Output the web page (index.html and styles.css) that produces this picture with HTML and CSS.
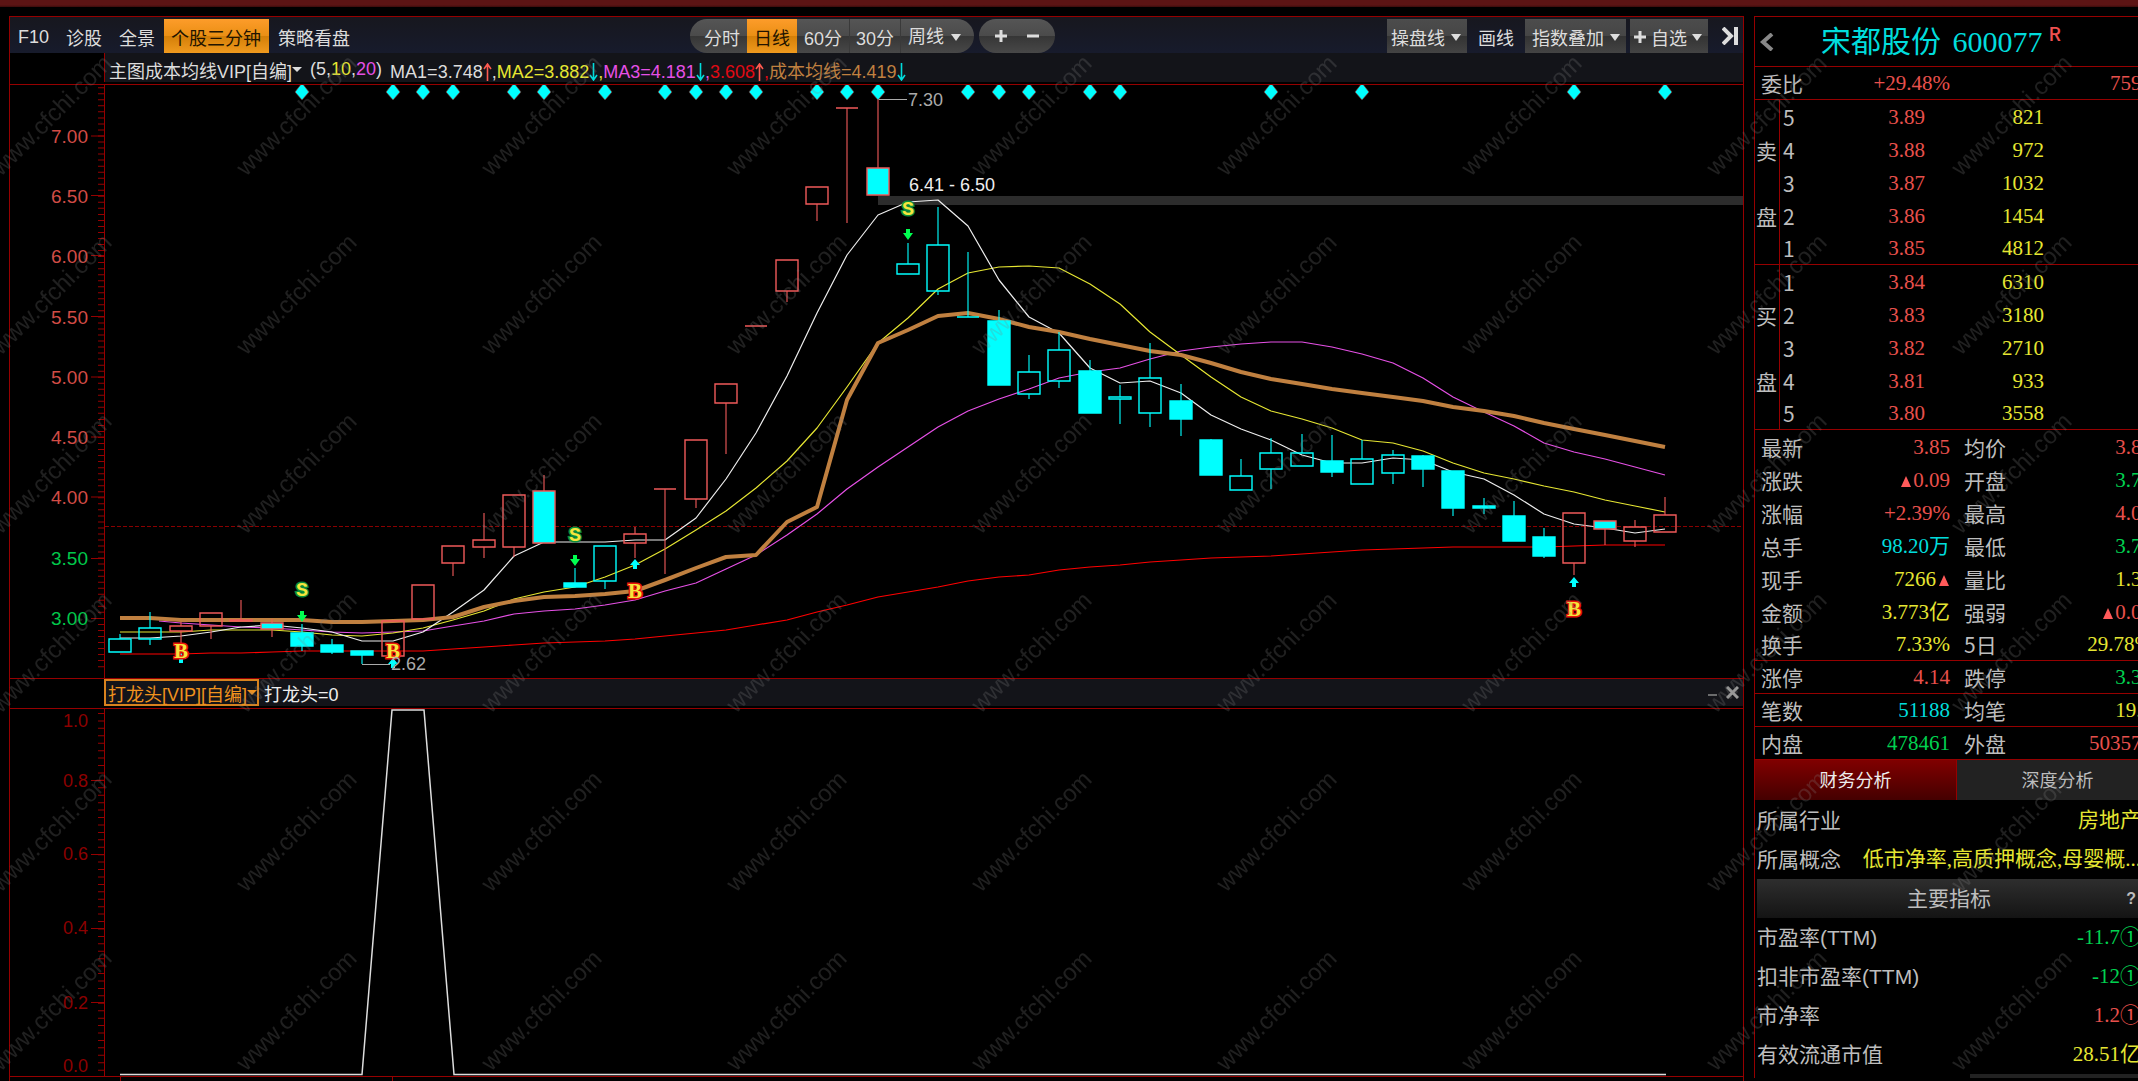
FILE: index.html
```html
<!DOCTYPE html>
<html lang="zh-CN">
<head>
<meta charset="utf-8">
<meta name="viewport" content="width=device-width, initial-scale=1">
<title>宋都股份 600077</title>
<link rel="stylesheet" href="styles.css">
</head>
<body>
<div class="app">
  <div class="app-strip"></div>
  <div class="workspace">

    <main class="board">
      <header class="toolbar">
        <nav class="tools">
          <button class="tool" type="button">F10</button>
          <button class="tool" type="button">诊股</button>
          <button class="tool" type="button">全景</button>
          <button class="tool tool-active" type="button">个股三分钟</button>
          <button class="tool" type="button">策略看盘</button>
        </nav>
        <div class="periods">
          <div class="pill">
            <button class="period period-first" type="button">分时</button>
            <button class="period period-active" type="button">日线</button>
            <button class="period" type="button">60分</button>
            <button class="period period-ruled" type="button">30分</button>
            <span class="period-pick">
              <select class="period-select" aria-label="周期"><option>周线</option></select>
              <span class="caret"></span>
            </span>
          </div>
          <div class="pill pill-zoom">
            <button class="zoom" type="button" aria-label="放大"><svg width="12" height="12" viewBox="0 0 12 12"><path d="M6 0v12M0 6h12" stroke="#ddd" stroke-width="3"/></svg></button>
            <button class="zoom" type="button" aria-label="缩小"><svg width="12" height="12" viewBox="0 0 12 12"><path d="M0 6h12" stroke="#ddd" stroke-width="3"/></svg></button>
          </div>
        </div>
        <div class="actions">
          <button class="menu" type="button">操盘线<span class="caret"></span></button>
          <button class="tool draw" type="button">画线</button>
          <button class="menu menu-wide" type="button">指数叠加<span class="caret"></span></button>
          <button class="menu menu-add" type="button"><svg width="12" height="12" viewBox="0 0 12 12"><path d="M6 0v12M0 6h12" stroke="#ddd" stroke-width="3"/></svg>自选<span class="caret"></span></button>
          <button class="collapse" type="button" aria-label="收起侧栏"><svg width="17" height="18" viewBox="0 0 17 18"><path d="M1 1l8 8-8 8M14 0v18" fill="none" stroke="#ddd" stroke-width="4"/></svg></button>
        </div>
      </header>

      <div class="legend-row">
        <div class="legend">
          <button class="indicator" type="button">主图成本均线VIP[自编]<span class="caret caret-small"></span></button>
          <span class="params">(5,<span class="yellow">10</span>,<span class="magenta">20</span>)</span>
          <span class="averages">MA1=3.748<svg class="trend up" viewBox="0 0 9 18"><path d="M4.500 18V1M1 6l3.500-5L8 6"/></svg>,<span class="yellow">MA2=3.882<svg class="trend down" viewBox="0 0 9 18"><path d="M4.500 0v17M1 12l3.500 5L8 12"/></svg>,</span><span class="magenta">MA3=4.181<svg class="trend down" viewBox="0 0 9 18"><path d="M4.500 0v17M1 12l3.500 5L8 12"/></svg>,</span><span class="red">3.608<svg class="trend up" viewBox="0 0 9 18"><path d="M4.500 18V1M1 6l3.500-5L8 6"/></svg>,</span><span class="bronze">成本均线=4.419<svg class="trend down" viewBox="0 0 9 18"><path d="M4.500 0v17M1 12l3.500 5L8 12"/></svg></span></span>
        </div>
      </div>

      <svg class="chart price-chart" id="price-chart" viewBox="10 85 1733 593" role="img" aria-label="日K线图">
        <path class="rule" d="M104.500 85V678"/>
        <path class="ticks" d="M101 87.250V668" stroke-dasharray="1 5.030"/>
        <path class="rule" d="M91 136h13M91 195.500h13M91 255.500h13M91 316.500h13M91 377h13M91 437h13M91 497h13M91 558.500h13M91 618.500h13"/>
        <g class="scale">
          <text x="88" y="143">7.00</text><text x="88" y="203">6.50</text><text x="88" y="263">6.00</text>
          <text x="88" y="324">5.50</text><text x="88" y="384">5.00</text><text x="88" y="444">4.50</text>
          <text x="88" y="504">4.00</text><text class="below" x="88" y="565">3.50</text><text class="below" x="88" y="625">3.00</text>
        </g>
        <rect x="878" y="196" width="865" height="9" fill="#2c2c2c"/>
        <path class="last-close" d="M105 526.500H1743"/>
        <g id="averages"></g>
        <g id="candles"></g>
        <path d="M878 99.500h29M362 664.500h28" stroke="#aaa" stroke-width="1"/>
        <g id="marks"></g>
        <g class="notes">
          <text x="908" y="106">7.30</text>
          <text x="391" y="670">2.62</text>
          <text class="note-bright" x="909" y="191">6.41 - 6.50</text>
        </g>
      </svg>

      <div class="sub-row">
        <div class="sub-legend">
          <button class="sub-indicator" type="button">打龙头[VIP][自编]<span class="caret caret-small"></span></button>
          <span class="sub-value">打龙头=0</span>
          <span class="sub-controls">
            <button class="bare" type="button" aria-label="最小化"><svg width="9" height="12" viewBox="0 0 9 12"><path d="M0 8h9" stroke="#888" stroke-width="1.500"/></svg></button>
            <button class="bare" type="button" aria-label="关闭"><svg width="13" height="13" viewBox="0 0 13 13"><path d="M1 1l11 11M12 1L1 12" stroke="#999" stroke-width="3"/></svg></button>
          </span>
        </div>
      </div>

      <svg class="chart" viewBox="10 709 1733 372" role="img" aria-label="打龙头指标图">
        <path class="rule" d="M104.500 709V1076M10 1076.500H1743M120.500 1076v5M392.500 1076v5"/>
        <path class="ticks" d="M101 713V1072" stroke-dasharray="1 6.430"/>
        <path class="rule" d="M91 780.500h13M91 854.500h13M91 928.500h13M91 1002.500h13"/>
        <g class="sub-scale">
          <text x="88" y="727">1.0</text><text x="88" y="787">0.8</text><text x="88" y="860">0.6</text>
          <text x="88" y="934">0.4</text><text x="88" y="1009">0.2</text><text x="88" y="1072">0.0</text>
        </g>
        <path d="M120 1074.500H362L392 710H424L454 1074.500H1666" fill="none" stroke="#ddd" stroke-width="1.500"/>
      </svg>
    </main>

    <aside class="quote">
      <header class="quote-head">
        <button class="bare back" type="button" aria-label="上一只"><svg width="15" height="18" viewBox="0 0 15 18"><path d="M13 1L4 9l9 8" fill="none" stroke="#888" stroke-width="4"/></svg></button>
        <h1 class="stock">宋都股份 <span class="code">600077</span></h1><sup class="margin-flag">R</sup>
      </header>

      <table class="stats">
        <colgroup><col class="c-label"><col class="c-value"><col class="c-label2"><col></colgroup>
        <tbody><tr class="ruled"><th>委比</th><td class="rise">+29.48%</td><th></th><td class="rise">7599</td></tr></tbody>
      </table>

      <table class="book">
        <colgroup><col class="c-side"><col class="c-level"><col class="c-price"><col class="c-volume"><col></colgroup>
        <tbody>
          <tr><th></th><th>5</th><td class="rise">3.89</td><td>821</td><td></td></tr>
          <tr><th>卖</th><th>4</th><td class="rise">3.88</td><td>972</td><td></td></tr>
          <tr><th></th><th>3</th><td class="rise">3.87</td><td>1032</td><td></td></tr>
          <tr><th>盘</th><th>2</th><td class="rise">3.86</td><td>1454</td><td></td></tr>
          <tr class="ruled"><th></th><th>1</th><td class="rise">3.85</td><td>4812</td><td></td></tr>
          <tr><th></th><th>1</th><td class="rise">3.84</td><td>6310</td><td></td></tr>
          <tr><th>买</th><th>2</th><td class="rise">3.83</td><td>3180</td><td></td></tr>
          <tr><th></th><th>3</th><td class="rise">3.82</td><td>2710</td><td></td></tr>
          <tr><th>盘</th><th>4</th><td class="rise">3.81</td><td>933</td><td></td></tr>
          <tr class="ruled"><th></th><th>5</th><td class="rise">3.80</td><td>3558</td><td></td></tr>
        </tbody>
      </table>

      <table class="stats">
        <colgroup><col class="c-label"><col class="c-value"><col class="c-label2"><col></colgroup>
        <tbody>
          <tr><th>最新</th><td class="rise">3.85</td><th>均价</th><td class="rise">3.84</td></tr>
          <tr><th>涨跌</th><td class="rise"><span class="tri"></span>0.09</td><th>开盘</th><td class="fall">3.71</td></tr>
          <tr><th>涨幅</th><td class="rise">+2.39%</td><th>最高</th><td class="rise">4.00</td></tr>
          <tr><th>总手</th><td class="aqua">98.20万</td><th>最低</th><td class="fall">3.71</td></tr>
          <tr><th>现手</th><td>7266<span class="tri tri-after"></span></td><th>量比</th><td>1.31</td></tr>
          <tr><th>金额</th><td>3.773亿</td><th>强弱</th><td class="rise"><span class="tri"></span>0.01</td></tr>
          <tr class="ruled"><th>换手</th><td>7.33%</td><th>5日</th><td>29.78%</td></tr>
          <tr class="ruled"><th>涨停</th><td class="rise">4.14</td><th>跌停</th><td class="fall">3.38</td></tr>
          <tr class="ruled"><th>笔数</th><td class="aqua">51188</td><th>均笔</th><td>19.2</td></tr>
          <tr class="ruled"><th>内盘</th><td class="fall">478461</td><th>外盘</th><td class="rise">503575</td></tr>
        </tbody>
      </table>

      <div class="tabs">
        <button class="tab tab-active" type="button">财务分析</button>
        <button class="tab" type="button">深度分析</button>
      </div>

      <section class="finance">
        <dl class="facts">
          <div class="fact"><dt>所属行业</dt><dd>房地产</dd></div>
          <div class="fact"><dt>所属概念</dt><dd>低市净率,高质押概念,母婴概...</dd></div>
        </dl>
        <h2 class="facts-title">主要指标<button class="bare help" type="button">?</button></h2>
        <dl class="facts">
          <div class="fact"><dt>市盈率(TTM)</dt><dd class="fall">-11.7①</dd></div>
          <div class="fact"><dt>扣非市盈率(TTM)</dt><dd class="fall">-12①</dd></div>
          <div class="fact"><dt>市净率</dt><dd class="rise">1.2①</dd></div>
          <div class="fact"><dt>有效流通市值</dt><dd>28.51亿</dd></div>
        </dl>
      </section>
      <div class="next-panel"></div>
    </aside>
  </div>

  <svg class="watermark" aria-hidden="true">
    <defs>
      <pattern id="site" x="-9" y="10" width="245" height="179" patternUnits="userSpaceOnUse">
        <text x="10" y="167" transform="rotate(-45 10 167)">www.cfchi.com</text>
      </pattern>
    </defs>
    <rect width="100%" height="100%" fill="url(#site)"/>
  </svg>
</div>
<script src="chart.js"></script>
</body>
</html>
```
FILE: styles.css
```css
:root {
  --line: #960000;
  --rise: #e8504c;
  --fall: #00d250;
  --yellow: #e6e632;
  --aqua: #00dcdc;
  --label: #bdbdbd;
  --cjk: "Noto Sans CJK SC", sans-serif;
  --ui: "Liberation Sans", "Noto Sans CJK SC", sans-serif;
  --figures: "Liberation Serif", "Noto Sans CJK SC", serif;
}

* { box-sizing: border-box; }

body {
  margin: 0;
  background: #000;
  color: #ddd;
  font-family: var(--ui);
  font-size: 18px;
}

button, select {
  margin: 0;
  padding: 0;
  border: 0;
  background: none;
  color: inherit;
  font: inherit;
  white-space: nowrap;
}

svg { display: block; }

.app {
  position: relative;
  min-height: 100vh;
  overflow: hidden;
}

.app-strip {
  height: 7px;
  background: linear-gradient(#5c1414 70%, #3c0c0c);
}

.workspace {
  display: flex;
  align-items: flex-start;
  gap: 10px;
  margin: 9px -20px 0 9px;
}

.board {
  flex: 1;
  min-width: 0;
  border: 1px solid var(--line);
  border-bottom: 0;
}

/* toolbar */
.toolbar {
  display: grid;
  grid-template-columns: 1fr auto 1fr;
  height: 36px;
  padding-top: 2px;
  background: linear-gradient(#17171e, #171b2c);
}

.tools, .periods, .actions, .pill { display: flex; }
.tools { gap: 1px; }
.tool, .period, .menu { padding: 2px 8px 0; }

.tools .tool-active { padding: 2px 8px 0 7px; }

.tool-active, .period-active {
  background: linear-gradient(#fd9c2a, #ea8f14 50%, #d47f08 51%, #f09a1e);
  color: #221400;
}

.periods {
  gap: 5px;
  margin-right: 8px;
}

.pill {
  overflow: hidden;
  border-radius: 17px;
  background: linear-gradient(#555, #4b4b4b 49%, #363636 51%, #484848);
}

.period { padding: 2px 7px 0; }
.period-first { padding-left: 14px; }
.period-ruled { border: solid #3a3a3a; border-width: 0 1px; padding: 2px 6px 0; }

.period-pick {
  display: flex;
  align-items: center;
  padding: 2px 13px 0 7px;
}

.period-select {
  width: 43px;
  appearance: none;
}

.pill-zoom {
  width: 76px;
  justify-content: center;
  align-items: center;
  gap: 20px;
}

.caret {
  display: inline-block;
  border: solid transparent;
  border-width: 7px 5px 0;
  border-top-color: #ddd;
}

.caret-small {
  border-width: 5px 5px 0;
  border-top-color: currentColor;
}

.actions {
  justify-content: flex-end;
  padding-right: 4px;
}

.menu {
  display: flex;
  align-items: center;
  gap: 6px;
  padding: 2px 6px 0 4px;
  background: linear-gradient(#4c4c4c, #464646 49%, #333 51%, #444);
}

.menu-wide { padding: 2px 6px 0 7px; }
.menu-add { gap: 5px; margin-left: 4px; }
.draw { padding: 2px 11px 0; }
.collapse { margin-left: 14px; }

/* indicator captions */
.legend-row, .sub-row {
  padding-left: 94px;
  border-bottom: 1px solid var(--line);
}

.legend, .sub-legend {
  display: flex;
  align-items: center;
  border-left: 1px solid var(--line);
  background: #131419;
  white-space: nowrap;
}

.legend-row { padding-bottom: 2px; }
.legend { height: 29px; padding: 4px 0 0 4px; }
.indicator, .sub-indicator { display: flex; align-items: center; }
.params { margin-left: 8px; }
.averages { margin-left: 8px; }

.yellow { color: var(--yellow); }
.magenta { color: #e650e6; }
.red { color: #e00a14; }
.bronze { color: #c08040; }
.up { color: #ff5a50; }
.down { color: #00dcdc; }

.trend {
  display: inline-block;
  width: 9px;
  height: 18px;
  vertical-align: -3px;
  fill: none;
  stroke: currentColor;
  stroke-width: 1.6px;
}

.sub-row { padding-bottom: 2px; border-top: 1px solid var(--line); }
.sub-legend { height: 27px; border-left: 0; }

.sub-indicator {
  height: 27px;
  padding: 0 0 0 2px;
  border: 2px solid #d8821e;
  color: #f0921e;
}

.sub-value { margin-left: 5px; color: #eee; }
.sub-controls { display: flex; align-items: center; gap: 9px; margin: 0 4px 0 auto; }

/* charts */
.chart { width: 100%; height: auto; }

.rule { stroke: var(--line); stroke-width: 1; fill: none; }
.ticks { stroke: var(--line); stroke-width: 6; fill: none; }
.last-close { stroke: #8a0000; stroke-dasharray: 4 2; }

.scale text, .sub-scale text { text-anchor: end; fill: #d24c46; font-size: 19px; }
.scale .below { fill: #00c84b; }
.sub-scale text { fill: #8c0000; font-size: 18px; }
.notes { fill: #aaa; font-size: 18px; }
.note-bright { fill: #eee; }

.average { fill: none; stroke-width: 1.2px; stroke-linejoin: round; }
.wick { stroke-width: 1.4px; opacity: .8; }
.body { stroke-width: 1.4px; }

.mark {
  font: bold 20px "Liberation Mono", monospace;
  text-anchor: middle;
  fill: #f5e63c;
  stroke-width: 3px;
  paint-order: stroke;
}

.mark-sell { stroke: #0a8c3c; }
.mark-buy { font: bold 21px "Liberation Serif", serif; stroke: #e6140a; }

/* quote panel */
.quote {
  flex: none;
  width: 404px;
  border: solid var(--line);
  border-width: 1px 0 0 1px;
}

.quote-head {
  display: flex;
  align-items: center;
  height: 50px;
  padding-left: 4px;
  border-bottom: 1px solid var(--line);
  color: var(--aqua);
}

.back { margin-right: 47px; }

.stock {
  margin: 0;
  font: 30px/48px var(--figures);
  white-space: pre;
}

.code { margin-left: 4px; }

.margin-flag {
  align-self: flex-start;
  margin: 5px 0 0 6px;
  color: #f05050;
  font: 500 19px/22px var(--cjk);
}

.stats, .book {
  width: 100%;
  table-layout: fixed;
  border-collapse: separate;
  border-spacing: 0;
  font: 21px/32px var(--figures);
}

.stats th, .stats td, .book th, .book td {
  height: 33px;
  padding: 0;
  white-space: nowrap;
}

.stats th, .book th {
  color: var(--label);
  font: 21px/32px var(--cjk);
  text-align: left;
}

.stats td, .book td { color: var(--yellow); text-align: right; }
.ruled th, .ruled td { border-bottom: 1px solid var(--line); }

.stats th:first-child { padding-left: 6px; }
.stats th:nth-child(3) { padding-left: 14px; }
.stats td:last-child { padding-right: 6px; }
.c-label { width: 60px; }
.c-value { width: 135px; }
.c-label2 { width: 70px; }

.c-side { width: 25px; }
.c-level { width: 20px; }
.c-price { width: 125px; }
.c-volume { width: 119px; }
.book th:first-child { padding-left: 1px; border-right: 1px solid var(--line); }
.book th:nth-child(2) { padding-left: 3px; }

.stats .rise, .book .rise, .fact .rise { color: var(--rise); }
.stats .fall, .fact .fall { color: var(--fall); }
.stats .aqua { color: var(--aqua); }

.tri {
  display: inline-block;
  margin-right: 2px;
  border: solid transparent;
  border-width: 0 5px 11px;
  border-bottom-color: #ff5a5a;
}

.tri-after { margin: 0 1px 0 3px; }

.tabs {
  display: flex;
  height: 40px;
}

.tab {
  flex: 1;
  padding-bottom: 2px;
  background: #222;
  color: var(--label);
}

.tab-active {
  border-right: 1px solid var(--line);
  background: linear-gradient(#800000, #440000);
  color: #eee;
}

.finance { padding: 1px 17px 0 2px; }
.facts { margin: 0; }

.fact {
  display: flex;
  justify-content: space-between;
  font: 21px/39px var(--ui);
  white-space: nowrap;
}

.fact dt { color: var(--label); }
.fact dd { margin: 0; color: var(--yellow); font-family: var(--figures); }

.facts-title {
  display: flex;
  position: relative;
  justify-content: center;
  margin: 0;
  background: linear-gradient(#2e2e2e, #141414);
  color: var(--label);
  font: 21px/39px var(--ui);
}

.help {
  position: absolute;
  right: 5px;
  font: bold 16px/39px var(--ui);
}

.next-panel {
  height: 4px;
  margin-left: 215px;
  background: #222;
}

.watermark {
  position: absolute;
  inset: 0;
  width: 100%;
  height: 100%;
  pointer-events: none;
}

.watermark text {
  fill: #808080;
  fill-opacity: .25;
  font: 24px "Liberation Sans", sans-serif;
}
```
FILE: chart.js
```js
// Geometry of the daily price chart: one slot per trading day.
const NS = "http://www.w3.org/2000/svg";
const RED = "#f05a5a";
const CYAN = "#00ffff";
const slot = n => Math.round(120 + 30.3 * n);

// [kind, high, body top, body bottom, low]
// u: hollow red, c: hollow cyan, d: solid cyan, m: solid cyan with a red edge
const days = [
  ["c",634,639,652,652],["c",612,628,639,645],["u",622,626,631,645],["u",613,613,626,639],
  ["u",600,620,621,621],["m",619,623,629,637],["d",624,633,646,651],["d",639,645,652,654],
  ["d",651,651,655,664],["u",621,621,656,656],["u",585,585,619,619],["u",546,546,563,576],
  ["u",513,540,547,558],["u",495,495,547,557],["m",475,491,543,543],["d",568,583,587,587],
  ["c",546,546,581,589],["u",527,534,543,558],["u",489,489,489,574],["u",440,440,499,508],
  ["u",384,384,403,454],["u",326,326,326,326],["u",260,260,291,302],["u",187,187,204,221],
  ["u",108,108,108,223],["m",99,168,195,195],["c",243,264,274,274],["c",207,245,291,295],
  ["c",252,317,317,317],["d",310,321,385,385],["c",355,372,394,399],["c",332,350,381,388],
  ["d",360,371,413,413],["c",385,397,399,424],["c",343,378,413,427],["d",384,401,419,436],
  ["d",439,440,475,475],["c",459,476,490,490],["c",438,453,469,489],["c",434,453,466,466],
  ["d",435,461,472,477],["c",440,459,484,484],["c",450,455,473,484],["d",455,456,469,487],
  ["d",471,471,508,516],["d",498,506,508,514],["d",501,516,541,541],["d",528,537,556,558],
  ["u",513,513,563,575],["m",521,521,529,545],["u",520,527,541,547],["u",497,515,532,532]
];

const averages = [
  { color: "#ff0000", y: [654,654,654,653,653,652,651,651,651,651,651,649,647,645,643,642,641,639,636,633,630,625,620,612,605,597,592,587,581,577,575,570,567,565,562,560,558,557,556,554,552,550,549,548,547,547,547,547,546,545,545,545] },
  { color: "#e650e6", from: 1.3, y: [null,621,623,625,627,628,630,632,633,632,631,626,621,614,611,609,605,600,591,583,569,555,535,514,489,467,447,427,411,399,389,378,372,368,359,351,347,344,342,342,347,354,363,378,397,412,426,443,452,459,467,475] },
  { color: "#e6e632", y: [632,632,632,630,630,630,632,635,636,633,628,620,611,599,592,587,577,565,549,530,511,488,461,428,387,343,318,289,273,267,266,268,284,304,332,355,377,397,411,419,428,440,443,451,463,473,479,486,492,500,506,512] },
  { color: "#eeeeee", y: [638,638,636,632,627,625,628,632,641,641,632,612,590,556,542,542,542,540,540,518,479,433,376,313,255,215,202,200,226,280,317,333,368,383,381,393,415,429,440,455,463,463,458,460,472,479,495,514,524,528,533,529] },
  { color: "#c08040", width: 4, y: [618,618,620,620,620,620,620,622,622,621,620,617,607,601,597,596,594,591,580,568,557,555,522,507,400,343,330,316,313,319,327,332,339,345,351,355,363,372,379,384,389,393,397,401,407,411,416,423,429,435,441,447] }
];

const diamonds = [6,9,10,11,13,14,16,18,19,20,21,23,24,25,28,29,30,32,33,38,41,48,51];
// [slot, letter baseline, arrow top]
const sells = [[6,596,611],[15,541,555],[26,215,229]];
const buys = [[2,658,653],[9,658,658],[17,598,559],[48,616,577]];

function add(parent, name, attrs, text) {
  const node = document.createElementNS(NS, name);
  for (const key in attrs) node.setAttribute(key, attrs[key]);
  if (text) node.textContent = text;
  parent.appendChild(node);
}

const lines = document.getElementById("averages");
for (const line of averages) {
  const points = line.y.map((y, n) => y === null ? "" : `${slot(n === 1 && line.from ? line.from : n)},${y}`);
  const attrs = { class: "average", points: points.join(" ").trim(), stroke: line.color };
  if (line.width) attrs.style = `stroke-width:${line.width}px`;
  add(lines, "polyline", attrs);
}

const candles = document.getElementById("candles");
days.forEach(([kind, high, top, bottom, low], n) => {
  const x = slot(n);
  const edge = kind === "u" || kind === "m" ? RED : CYAN;
  const fill = kind === "d" || kind === "m" ? CYAN : "none";
  add(candles, "path", { class: "wick", d: `M${x} ${high}V${top}M${x} ${bottom}V${low}`, stroke: edge });
  add(candles, "path", { class: "body", d: `M${x - 11} ${top}h22V${bottom}h-22z`, stroke: edge, fill });
});

const marks = document.getElementById("marks");
for (const n of diamonds) {
  add(marks, "path", { d: `M${slot(n)} 83l7 9-7 8-7-8z`, fill: CYAN, stroke: "#8c2020", "stroke-width": .6 });
}
for (const [n, base, top] of sells) {
  add(marks, "path", { d: `M${slot(n) - 2} ${top}h4v4h3l-5 7-5-7h3z`, fill: "#00ff50" });
  add(marks, "text", { class: "mark mark-sell", x: slot(n), y: base }, "S");
}
for (const [n, base, top] of buys) {
  add(marks, "path", { d: `M${slot(n)} ${top}l5 6h-3v4h-4v-4h-3z`, fill: CYAN });
  add(marks, "text", { class: "mark mark-buy", x: slot(n), y: base }, "B");
}
```
